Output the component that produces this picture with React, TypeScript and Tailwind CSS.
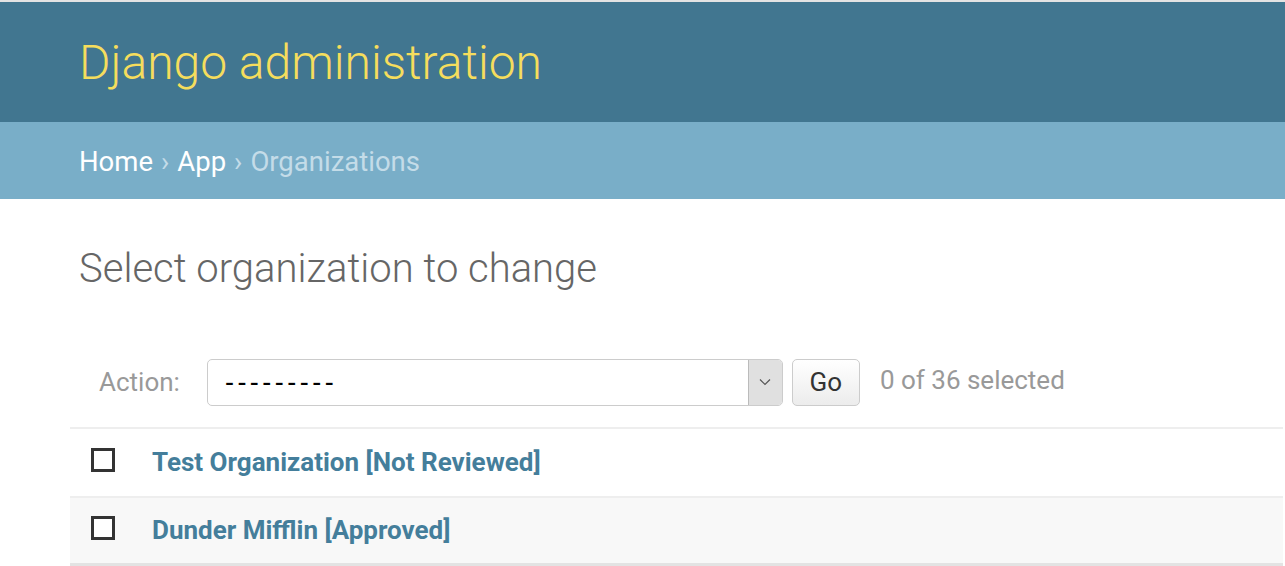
import React from 'react';

const rows = [
  { name: 'Test Organization [Not Reviewed]', bg: 'bg-white' },
  { name: 'Dunder Mifflin [Approved]', bg: 'bg-[#f8f8f8]' },
];

const App: React.FC = () => {
  return (
    <div className="min-h-screen bg-white font-['Roboto',sans-serif]">
      <div className="h-[2px] bg-[#e3e3e3]"></div>

      {/* header */}
      <div className="h-[120px] bg-[#417690] flex items-center pl-[79px]">
        <h1 className="text-[48px] font-light text-[#f5dd5d] leading-none pt-[2px]">Django administration</h1>
      </div>

      {/* breadcrumbs */}
      <div className="h-[77px] bg-[#79aec8] flex items-center pl-[79px] pt-[3px] text-[27.5px] text-[#c4dce8]">
        <a className="text-white">Home</a>
        <span className="mx-[8px]">›</span>
        <a className="text-white">App</a>
        <span className="mx-[8px]">›</span>
        <span>Organizations</span>
      </div>

      {/* content */}
      <div className="pl-[70px] pr-[2px]">
        <h2 className="pl-[9px] pt-[50px] text-[40px] font-light text-[#666] leading-none">Select organization to change</h2>

        <div className="mt-[69px] flex items-center h-[48px] pl-[29px]">
          <label className="text-[26px] text-[#999] mr-[27px]">Action:</label>
          <div className="flex h-[47px] w-[576px] rounded-[5px] border border-[#ccc] overflow-hidden">
            <div className="flex-1 flex items-center pl-[17px] font-['Liberation_Sans',sans-serif] text-[27px] text-black tracking-[3.5px]">---------</div>
            <div className="w-[34px] bg-[#e0e0e0] border-l border-[#bbb] flex items-center justify-center">
              <svg width="12" height="8" viewBox="0 0 12 8" fill="none" stroke="#555" strokeWidth="1.2">
                <path d="M1 1.5 L6 6.5 L11 1.5" />
              </svg>
            </div>
          </div>
          <button className="ml-[9px] h-[47px] w-[68px] rounded-[5px] border border-[#ccc] bg-gradient-to-b from-white to-[#ececec] text-[26px] text-[#333]">Go</button>
          <span className="ml-[20px] text-[26px] text-[#999] -mt-[4px]">0 of 36 selected</span>
        </div>

        <div className="mt-[21px] border-t-2 border-[#eee]">
          {rows.map((r, i) => (
            <div key={i} className={`flex items-center h-[67px] ${r.bg} ${i > 0 ? 'border-t-2 border-[#eee]' : ''}`}>
              <div className="ml-[21px] w-[24px] h-[24px] border-[3px] border-[#333] bg-white -mt-[6px]"></div>
              <a className="ml-[37px] text-[26px] font-bold text-[#447e9b]">{r.name}</a>
            </div>
          ))}
          <div className="h-[4px] bg-[#e3e3e3]"></div>
        </div>
      </div>
    </div>
  );
};

export default App;
